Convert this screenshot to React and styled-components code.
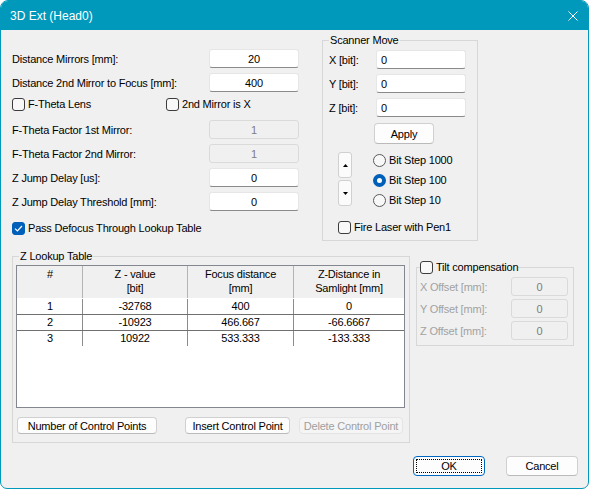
import React from 'react';
import styled, { createGlobalStyle } from 'styled-components';

const ACCENT = '#0099bc';

const GlobalStyle = createGlobalStyle`
  html, body {
    margin: 0;
    padding: 0;
    background: #ffffff;
  }
  body {
    font-family: "Liberation Sans", Arial, sans-serif;
    font-size: 11px;
    letter-spacing: -0.2px;
    color: #000;
  }
  * {
    box-sizing: border-box;
  }
`;

const Window = styled.div`
  width: 589px;
  height: 489px;
  border: 1px solid ${ACCENT};
  border-radius: 8px 8px 7px 7px;
  background: #f0f0f0;
  overflow: hidden;
  display: flex;
  flex-direction: column;
`;

const TitleBar = styled.div`
  height: 29px;
  flex: none;
  background: ${ACCENT};
  color: #fff;
  display: flex;
  align-items: center;
  justify-content: space-between;
  padding-left: 9px;
  font-size: 12px;
  letter-spacing: 0;
`;

const CloseButton = styled.div`
  width: 30px;
  height: 29px;
  display: flex;
  align-items: center;
  justify-content: center;
`;

const Body = styled.div`
  flex: 1;
  display: flex;
  flex-direction: column;
  padding: 3px 10px 0 11px;
`;

const TopArea = styled.div`
  display: flex;
  align-items: flex-start;
`;

const FormColumn = styled.div`
  width: 288px;
  flex: none;
  padding-top: 16px;
  display: flex;
  flex-direction: column;
`;

const FieldRow = styled.div`
  display: flex;
  align-items: center;
  height: 19px;
  margin-top: ${p => p.$mt || 0}px;
`;

const FieldLabel = styled.span`
  width: ${p => p.$w}px;
  flex: none;
  white-space: nowrap;
  color: ${p => (p.$disabled ? '#a2a2a2' : '#000')};
`;

const TextBox = styled.input`
  width: ${p => p.$w}px;
  height: 100%;
  flex: none;
  font: inherit;
  letter-spacing: inherit;
  padding: 0 4px;
  margin: 0;
  outline: none;
  border-radius: 3px;
  text-align: ${p => p.$align || 'center'};
  border: 1px solid ${p => (p.disabled ? '#dadada' : '#e6e6e6')};
  border-bottom-color: ${p => (p.disabled ? '#dadada' : '#8a8a8a')};
  background: ${p => (p.disabled ? '#f0f0f0' : '#fff')};
  color: ${p => (p.disabled ? '#7d7d7d' : '#000')};
`;

const CheckRow = styled.div`
  display: flex;
  align-items: center;
  height: 14px;
  margin-top: ${p => p.$mt || 0}px;
  margin-left: ${p => p.$ml || 0}px;
`;

const CheckLabel = styled.label`
  display: inline-flex;
  align-items: center;
  gap: 3px;
  width: ${p => (p.$w ? `${p.$w}px` : 'auto')};
  white-space: nowrap;
`;

const Box = styled.span`
  width: 13px;
  height: 13px;
  flex: none;
  border-radius: 3px;
  border: 1px solid ${p => (p.$checked ? '#005fb8' : '#3c3c3c')};
  background: ${p => (p.$checked ? '#005fb8' : '#f8f8f8')};
  display: inline-flex;
  align-items: center;
  justify-content: center;
`;

const Group = styled.fieldset`
  margin: ${p => p.$margin || '0'};
  min-width: 0;
  width: ${p => p.$w}px;
  flex: none;
  border: 1px solid #d7d7d7;
  padding: ${p => p.$pad};
`;

const Legend = styled.legend`
  padding: ${p => (p.$tight ? '0' : '0 1px')};
  margin-left: ${p => p.$ml || 0}px;
  height: 14px;
  line-height: 14px;
  display: flex;
  align-items: center;
  gap: 3px;
`;

const PushButton = styled.div`
  width: ${p => p.$w}px;
  height: ${p => p.$h || 21}px;
  flex: none;
  display: flex;
  align-items: center;
  justify-content: center;
  border-radius: 4px;
  border: 1px solid ${p => (p.$disabled ? '#e4e4e4' : p.$default ? '#0067c0' : '#d0d0d0')};
  border-bottom-color: ${p => (p.$disabled ? '#e4e4e4' : p.$default ? '#0067c0' : '#bababa')};
  background: ${p => (p.$disabled ? '#f5f5f5' : '#fdfdfd')};
  color: ${p => (p.$disabled ? '#a0a0a0' : '#000')};
  margin-left: ${p => p.$ml || 0}px;
  margin-top: ${p => p.$mt || 0}px;
  outline: ${p => (p.$default ? '1px dotted #000' : 'none')};
  outline-offset: -4px;
`;

const StepArea = styled.div`
  display: flex;
  margin-top: 6px;
`;

const SpinColumn = styled.div`
  display: flex;
  flex-direction: column;
  gap: 2px;
  margin-left: 9px;
  margin-top: 2px;
`;

const SpinButton = styled.div`
  width: 14px;
  height: 26px;
  border: 1px solid #d0d0d0;
  border-radius: 3px;
  background: #fbfbfb;
  display: flex;
  align-items: center;
  justify-content: center;
`;

const RadioColumn = styled.div`
  display: flex;
  flex-direction: column;
  margin-left: 21px;
`;

const RadioRow = styled.label`
  display: flex;
  align-items: center;
  gap: 3px;
  height: 20px;
`;

const RadioDot = styled.span`
  width: 13px;
  height: 13px;
  border-radius: 50%;
  flex: none;
  border: ${p => (p.$checked ? '4px solid #005fb8' : '1px solid #5a5a5a')};
  background: ${p => (p.$checked ? '#fff' : '#f8f8f8')};
`;

const MiddleArea = styled.div`
  display: flex;
  align-items: flex-start;
  margin-top: 8px;
`;

const Table = styled.div`
  width: 389px;
  height: 143px;
  border: 1px solid #828790;
  background: #fff;
`;

const HeadRow = styled.div`
  display: grid;
  grid-template-columns: 65px 105px 106px 111px;
  height: 32px;
  background: #f0f0f0;
`;

const HeadCell = styled.div`
  text-align: center;
  line-height: 14px;
  padding-top: 1px;
  border-left: 1px solid ${p => (p.$first ? 'transparent' : '#b4b4b4')};
`;

const DataRow = styled.div`
  display: grid;
  grid-template-columns: 65px 105px 106px 111px;
  height: 16px;
  border-top: 1px solid ${p => (p.$first ? 'transparent' : '#707070')};
`;

const DataCell = styled.div`
  text-align: center;
  line-height: 15px;
  border-left: 1px solid ${p => (p.$first ? 'transparent' : '#8c8c8c')};
`;

const ButtonRow = styled.div`
  display: flex;
  margin-top: 9px;
  margin-left: 1px;
`;

const Footer = styled.div`
  display: flex;
  justify-content: flex-end;
  gap: 21px;
  margin-top: 13px;
`;

const Check = ({ checked, children, w }) => (
  <CheckLabel $w={w}>
    <Box $checked={checked}>
      {checked && (
        <svg width="9" height="7" viewBox="0 0 9 7">
          <path d="M1 3.6 L3.4 6 L8 1" fill="none" stroke="#fff" strokeWidth="1.2" />
        </svg>
      )}
    </Box>
    {children}
  </CheckLabel>
);

const Arrow = ({ up }) => (
  <svg width="5" height="3" viewBox="0 0 5 3">
    <path d={up ? 'M0 3 L2.5 0 L5 3 Z' : 'M0 0 L2.5 3 L5 0 Z'} fill="#000" />
  </svg>
);

const leftFields = [
  { label: 'F-Theta Factor 1st Mirror:', value: '1', disabled: true, mt: 9 },
  { label: 'F-Theta Factor 2nd Mirror:', value: '1', disabled: true, mt: 5 },
  { label: 'Z Jump Delay [us]:', value: '0', mt: 5 },
  { label: 'Z Jump Delay Threshold [mm]:', value: '0', mt: 5 },
];

const rows = [
  ['1', '-32768', '400', '0'],
  ['2', '-10923', '466.667', '-66.6667'],
  ['3', '10922', '533.333', '-133.333'],
];

const headers = [
  ['#', ''],
  ['Z - value', '[bit]'],
  ['Focus distance', '[mm]'],
  ['Z-Distance in', 'Samlight [mm]'],
];

export default function App() {
  return (
    <>
      <GlobalStyle />
      <Window>
        <TitleBar>
          <span>3D Ext (Head0)</span>
          <CloseButton>
            <svg width="10" height="10" viewBox="0 0 10 10">
              <path d="M0.5 0.5 L9.5 9.5 M9.5 0.5 L0.5 9.5" stroke="#fff" strokeWidth="1" />
            </svg>
          </CloseButton>
        </TitleBar>
        <Body>
          <TopArea>
            <FormColumn>
              <FieldRow>
                <FieldLabel $w={197}>Distance Mirrors [mm]:</FieldLabel>
                <TextBox $w={90} readOnly value="20" />
              </FieldRow>
              <FieldRow $mt={5}>
                <FieldLabel $w={197}>Distance 2nd Mirror to Focus [mm]:</FieldLabel>
                <TextBox $w={90} readOnly value="400" />
              </FieldRow>
              <CheckRow $mt={5}>
                <Check w={154}>F-Theta Lens</Check>
                <Check>2nd Mirror is X</Check>
              </CheckRow>
              {leftFields.map(f => (
                <FieldRow key={f.label} $mt={f.mt}>
                  <FieldLabel $w={197}>{f.label}</FieldLabel>
                  <TextBox $w={90} readOnly disabled={f.disabled} value={f.value} />
                </FieldRow>
              ))}
              <CheckRow $mt={10}>
                <Check checked>Pass Defocus Through Lookup Table</Check>
              </CheckRow>
            </FormColumn>

            <Group $w={156} $margin="0 0 0 22px" $pad="3px 11px 6px 6px">
              <Legend>Scanner Move</Legend>
              {['X', 'Y', 'Z'].map((axis, i) => (
                <FieldRow key={axis} $mt={i ? 5 : 0}>
                  <FieldLabel $w={47}>{axis} [bit]:</FieldLabel>
                  <TextBox $w={90} $align="left" readOnly value="0" />
                </FieldRow>
              ))}
              <PushButton $w={60} $ml={45} $mt={6}>Apply</PushButton>
              <StepArea>
                <SpinColumn>
                  <SpinButton><Arrow up /></SpinButton>
                  <SpinButton><Arrow /></SpinButton>
                </SpinColumn>
                <RadioColumn>
                  <RadioRow><RadioDot />Bit Step 1000</RadioRow>
                  <RadioRow><RadioDot $checked />Bit Step 100</RadioRow>
                  <RadioRow><RadioDot />Bit Step 10</RadioRow>
                </RadioColumn>
              </StepArea>
              <CheckRow $mt={10} $ml={9}>
                <Check>Fire Laser with Pen1</Check>
              </CheckRow>
            </Group>
          </TopArea>

          <MiddleArea>
            <Group $w={398} $pad="2px 4px 8px 3px">
              <Legend $ml={3}>Z Lookup Table</Legend>
              <Table>
                <HeadRow>
                  {headers.map((h, i) => (
                    <HeadCell key={h[0]} $first={i === 0}>
                      {h[0]}
                      <br />
                      {h[1]}
                    </HeadCell>
                  ))}
                </HeadRow>
                {rows.map((r, ri) => (
                  <DataRow key={r[0]} $first={ri === 0}>
                    {r.map((c, ci) => (
                      <DataCell key={ci} $first={ci === 0}>{c}</DataCell>
                    ))}
                  </DataRow>
                ))}
              </Table>
              <ButtonRow>
                <PushButton $w={140} $h={17}>Number of Control Points</PushButton>
                <PushButton $w={105} $h={17} $ml={28}>Insert Control Point</PushButton>
                <PushButton $w={104} $h={17} $ml={9} $disabled>Delete Control Point</PushButton>
              </ButtonRow>
            </Group>

            <Group $w={158} $margin="11px 0 0 6px" $pad="3px 4px 5px 3px">
              <Legend $tight>
                <Check>Tilt compensation</Check>
              </Legend>
              {['X', 'Y', 'Z'].map((axis, i) => (
                <FieldRow key={axis} $mt={i ? 3 : 0}>
                  <FieldLabel $w={91} $disabled>{axis} Offset [mm]:</FieldLabel>
                  <TextBox $w={57} readOnly disabled value="0" />
                </FieldRow>
              ))}
            </Group>
          </MiddleArea>

          <Footer>
            <PushButton $w={72} $h={20} $default>OK</PushButton>
            <PushButton $w={72} $h={20}>Cancel</PushButton>
          </Footer>
        </Body>
      </Window>
    </>
  );
}
